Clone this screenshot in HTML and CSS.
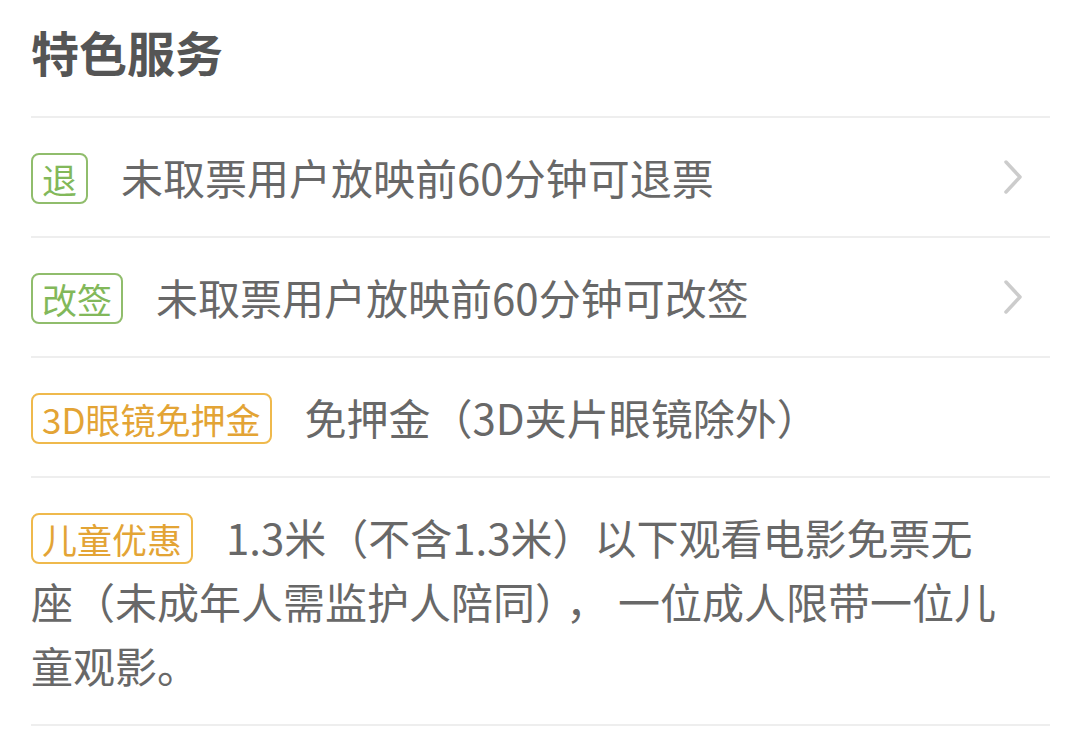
FILE: index.html
```html
<!DOCTYPE html>
<html>
<head>
    <meta charset="utf-8">
    <link rel="stylesheet" href="styles.css">
</head>
<body>
    <div class="services">
        <h2 class="services-title">特色服务</h2>

        <div class="service-row">
            <div class="service-text">
                <span class="tag tag-green">退</span><span class="desc">未取票用户放映前60分钟可退票</span>
            </div>
            <svg class="arrow" width="22" height="38" viewBox="0 0 22 38">
                <path d="M4 4 L18 19 L4 34" fill="none" stroke="#cccccc" stroke-width="3.5" stroke-linecap="round" stroke-linejoin="round"/>
            </svg>
        </div>

        <div class="service-row">
            <div class="service-text">
                <span class="tag tag-green">改签</span><span class="desc">未取票用户放映前60分钟可改签</span>
            </div>
            <svg class="arrow" width="22" height="38" viewBox="0 0 22 38">
                <path d="M4 4 L18 19 L4 34" fill="none" stroke="#cccccc" stroke-width="3.5" stroke-linecap="round" stroke-linejoin="round"/>
            </svg>
        </div>

        <div class="service-row">
            <div class="service-text">
                <span class="tag tag-orange">3D眼镜免押金</span><span class="desc">免押金（3D夹片眼镜除外）</span>
            </div>
        </div>

        <div class="service-row service-long">
            <div class="service-text">
                <span class="tag tag-orange">儿童优惠</span><span>1.3米（不含1.3米）以下观看电影免票无</span><span>座（未成年人需监护人陪同）</span><span class="comma">，</span><span>一位成人限带一位儿</span><span>童观影。</span>
            </div>
        </div>
    </div>
</body>
</html>
```

FILE: styles.css
```css
body {
    margin: 0;
    background: #ffffff;
    font-family: "Noto Sans CJK SC", "Noto Sans", sans-serif;
}
.services {
    padding: 0 30px 0 31px;
}
.services-title {
    margin: 0;
    padding: 16px 0 30px;
    line-height: 70px;
    font-size: 48px;
    font-weight: bold;
    color: #555555;
    border-bottom: 2px solid #eeeeee;
}
.service-row {
    display: flex;
    align-items: center;
    padding: 27px 0;
    border-bottom: 2px solid #eeeeee;
}
.service-text {
    flex: 1;
    font-size: 42px;
    line-height: 64px;
    color: #686868;
}
.service-long .service-text {
    padding-right: 40px;
}
.comma {
    margin: 0 10px;
}
.tag {
    display: inline-block;
    font-size: 35px;
    line-height: 47px;
    padding: 0 9px;
    margin-right: 33px;
    border: 2px solid;
    border-radius: 8px;
    vertical-align: middle;
    position: relative;
    top: -5px;
}
.tag-green {
    color: #82b85a;
    border-color: #90bd6c;
}
.tag-orange {
    color: #e3a435;
    border-color: #efb94c;
}
.arrow {
    margin-right: 26px;
}
```
